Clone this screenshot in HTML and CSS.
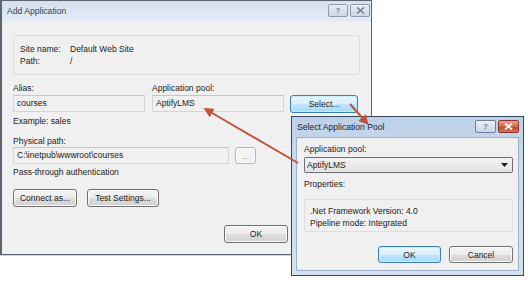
FILE: index.html
```html
<!DOCTYPE html>
<html>
<head>
    <title>Add Application</title>
    <link rel="stylesheet" href="styles.css">
</head>
<body>

<div class="window main-window">
    <div class="titlebar">
        <span class="title">Add Application</span>
        <div class="caption-buttons">
            <span class="cap-btn">?</span>
            <span class="cap-btn">
                <svg width="9" height="7" viewBox="0 0 9 7"><path d="M1 0.5 L8 6.5 M8 0.5 L1 6.5" stroke="#6f7d90" stroke-width="1.6"/></svg>
            </span>
        </div>
    </div>
    <div class="client">
        <div class="site-box">
            <div class="info-row"><span class="info-label">Site name:</span><span>Default Web Site</span></div>
            <div class="info-row"><span class="info-label">Path:</span><span>/</span></div>
        </div>
        <div class="field-row">
            <div class="field">
                <label>Alias:</label>
                <div class="textbox">courses</div>
            </div>
            <div class="field">
                <label>Application pool:</label>
                <div class="textbox">AptifyLMS</div>
            </div>
            <button class="btn btn-focus select-btn">Select...</button>
        </div>
        <div class="hint">Example: sales</div>
        <div class="path-label">Physical path:</div>
        <div class="path-row">
            <div class="textbox path-box">C:\inetpub\wwwroot\courses</div>
            <button class="btn btn-disabled browse-btn">...</button>
        </div>
        <div class="auth">Pass-through authentication</div>
        <div class="button-row">
            <button class="btn connect-btn">Connect as...</button>
            <button class="btn test-btn">Test Settings...</button>
        </div>
        <div class="footer-row">
            <button class="btn dlg-btn">OK</button>
            <button class="btn dlg-btn">Cancel</button>
        </div>
    </div>
</div>

<div class="window pool-window">
    <div class="titlebar">
        <span class="title">Select Application Pool</span>
        <div class="caption-buttons">
            <span class="cap-btn">?</span>
            <span class="cap-btn close-red">
                <svg width="9" height="7" viewBox="0 0 9 7"><path d="M1 0.5 L8 6.5 M8 0.5 L1 6.5" stroke="#fff" stroke-width="1.8"/></svg>
            </span>
        </div>
    </div>
    <div class="client">
        <div class="pool-label">Application pool:</div>
        <div class="combo">
            <span>AptifyLMS</span>
            <svg width="7" height="4" viewBox="0 0 7 4"><path d="M0 0 H7 L3.5 4 Z" fill="#222"/></svg>
        </div>
        <div class="props-label">Properties:</div>
        <div class="props-box">
            <div>.Net Framework Version: 4.0</div>
            <div>Pipeline mode: Integrated</div>
        </div>
        <div class="footer-row">
            <button class="btn btn-focus pool-ok">OK</button>
            <button class="btn pool-cancel">Cancel</button>
        </div>
    </div>
</div>

<svg class="arrows" width="528" height="288" viewBox="0 0 528 288">
    <defs>
        <marker id="head" markerWidth="5" markerHeight="5" refX="3" refY="2.5" orient="auto" markerUnits="strokeWidth">
            <path d="M0 0 L5 2.5 L0 5 Z" fill="#c2513a"/>
        </marker>
    </defs>
    <line x1="298" y1="163" x2="207" y2="110" stroke="#c2513a" stroke-width="2" marker-end="url(#head)"/>
    <line x1="350" y1="104" x2="366" y2="122" stroke="#c2513a" stroke-width="2" marker-end="url(#head)"/>
</svg>

</body>
</html>
```

FILE: styles.css
```css
body {
    margin: 0;
    width: 528px;
    height: 288px;
    background: #fff;
    position: relative;
    overflow: hidden;
    font-family: 'Liberation Sans', Arial, sans-serif;
    font-size: 8.5px;
    line-height: 12px;
    color: #1b1b1b;
}

.window {
    position: absolute;
    box-sizing: border-box;
    display: flex;
    flex-direction: column;
}

.main-window {
    left: 0;
    top: 0;
    width: 372px;
    height: 255px;
    border: 1px solid #5f656e;
    border-left-width: 2px;
    background: #f0f0f0;
    box-shadow: 0 1px 0 #d4d4d4;
}

.titlebar {
    display: flex;
    justify-content: space-between;
    align-items: flex-start;
    flex-shrink: 0;
}

.main-window .titlebar {
    height: 21px;
    padding: 0 1px 0 5px;
    background: linear-gradient(#d5e1ef, #e4ecf6);
}

.title {
    line-height: 21px;
    font-size: 8.6px;
    color: #3a3f47;
}

.caption-buttons {
    display: flex;
    gap: 2px;
    margin-top: 3px;
}

.cap-btn {
    width: 20px;
    height: 13px;
    box-sizing: border-box;
    border: 1px solid #8c9bb0;
    border-radius: 2px;
    background: linear-gradient(#e9eff7, #cbd7e6);
    display: flex;
    justify-content: center;
    align-items: center;
    font-weight: bold;
    font-size: 8px;
    color: #6f7d90;
}

.client {
    flex: 1;
    background: #f0f0f0;
}

.main-window .client {
    padding: 13px 0 0 11px;
}

.site-box {
    width: 347px;
    height: 40px;
    box-sizing: border-box;
    border: 1px solid #d5dfe5;
    border-radius: 3px;
    padding: 7px 0 0 6px;
}

.info-row {
    display: flex;
}

.info-label {
    width: 50px;
}

.field-row {
    display: flex;
    align-items: flex-end;
    margin-top: 7px;
}

.field {
    width: 132px;
    margin-right: 7px;
    display: flex;
    flex-direction: column;
}

.field label {
    height: 12px;
    margin-bottom: 1px;
}

.textbox {
    height: 17px;
    box-sizing: border-box;
    border: 1px solid #d2d5d9;
    border-top-color: #c3c7cc;
    padding-left: 3px;
    line-height: 15px;
    background: #f0f0f0;
}

.btn {
    font-family: inherit;
    font-size: 8.5px;
    color: #1b1b1b;
    height: 18px;
    box-sizing: border-box;
    padding: 0;
    border: 1px solid #707070;
    border-radius: 3px;
    background: linear-gradient(#f4f4f4 0%, #ececec 50%, #dedede 51%, #d0d0d0 100%);
    box-shadow: inset 0 0 0 1px #fbfbfb;
}

.btn-focus {
    border-color: #3c7fb1;
    background: linear-gradient(#eaf6fd 0%, #d9f0fc 50%, #bee6fd 51%, #a7d9f5 100%);
    box-shadow: inset 0 0 0 1px #c6ecfd;
}

.btn-disabled {
    border-color: #b2b7bb;
    background: #f4f4f4;
    color: #8d8d8d;
}

.select-btn {
    width: 68px;
    margin-left: -1px;
    margin-bottom: -1px;
}

.hint {
    margin-top: 3px;
}

.path-label {
    margin-top: 8px;
}

.path-row {
    display: flex;
    gap: 6px;
}

.path-box {
    width: 216px;
}

.browse-btn {
    width: 21px;
    height: 17px;
}

.auth {
    margin-top: 2px;
}

.button-row {
    display: flex;
    gap: 10px;
    margin-top: 11px;
}

.connect-btn {
    width: 64px;
}

.test-btn {
    width: 72px;
}

.footer-row {
    display: flex;
    justify-content: flex-end;
    gap: 6px;
}

.main-window .footer-row {
    margin-top: 18px;
    padding-right: 13px;
}

.dlg-btn {
    width: 64px;
}

.pool-window {
    left: 291px;
    top: 116px;
    width: 233px;
    height: 160px;
    border: 1px solid #34475f;
    padding: 0 4px 4px 4px;
    background: linear-gradient(#bcd0e8, #cddcee 30%, #d3e1f1);
    z-index: 2;
}

.pool-window .titlebar {
    height: 20px;
    padding-left: 1px;
}

.pool-window .title {
    line-height: 20px;
    color: #1e1e1e;
}

.pool-window .caption-buttons {
    margin-top: 3px;
}

.pool-window .cap-btn {
    width: 21px;
    border-color: #6d7f99;
}

.close-red {
    border-color: #8a3526 !important;
    background: linear-gradient(#eaa08f, #d2664e 50%, #c0442b 51%, #d1735d) !important;
}

.pool-window .client {
    border: 1px solid #9cafc6;
    padding: 5px 5px 0 7px;
}

.combo {
    width: 209px;
    height: 16px;
    box-sizing: border-box;
    margin-top: 2px;
    border: 1px solid #707070;
    border-radius: 2px;
    background: linear-gradient(#f3f3f3, #e3e3e3);
    display: flex;
    justify-content: space-between;
    align-items: center;
    padding: 0 4px 0 2px;
}

.props-label {
    margin-top: 5px;
}

.props-box {
    width: 209px;
    height: 33px;
    box-sizing: border-box;
    margin-top: 9px;
    border: 1px solid #dcdfe2;
    border-radius: 2px;
    padding: 5px 0 0 5px;
}

.pool-window .footer-row {
    margin-top: 14px;
    gap: 8px;
    padding-right: 0;
}

.pool-ok {
    width: 63px;
    height: 17px;
}

.pool-cancel {
    width: 64px;
    height: 17px;
}

.arrows {
    position: absolute;
    left: 0;
    top: 0;
    z-index: 3;
    pointer-events: none;
}
```
